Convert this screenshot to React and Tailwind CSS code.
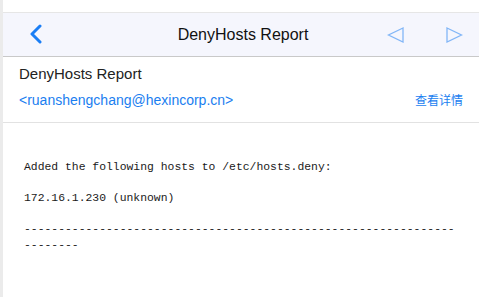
import React from 'react';

const dashes = '-'.repeat(71);

const body = `Added the following hosts to /etc/hosts.deny:

172.16.1.230 (unknown)

${dashes}`;

const App = () => {
    return (
        <div className="flex h-[297px] w-[479px] overflow-hidden bg-white font-['Liberation_Sans',Arial,sans-serif]">
            <div className="w-[3px] shrink-0 bg-[#ebebeb]" />

            <div className="flex flex-1 flex-col">
                <div className="h-[13px] shrink-0 border-b border-[#e6e6e6] bg-white" />

                <div className="relative flex h-[44px] shrink-0 items-center justify-center border-b border-[#c9c9c9] bg-[#f5f6fd] pl-[4px]">
                    <svg className="absolute left-[24px] top-[11px]" width="20" height="20" viewBox="0 0 20 20">
                        <path d="M13 2 L5 10 L13 18" fill="none" stroke="#1a7ef5" strokeWidth="3" strokeLinecap="round" strokeLinejoin="round" />
                    </svg>
                    <span className="text-[16px] text-[#111]">DenyHosts Report</span>
                    <svg className="absolute left-[384px] top-[14px]" width="17" height="16" viewBox="0 0 17 16">
                        <path d="M16 1 L1.5 8 L16 15 Z" fill="none" stroke="#82b6f7" strokeWidth="1.3" strokeLinejoin="miter" />
                    </svg>
                    <svg className="absolute left-[443px] top-[14px]" width="17" height="16" viewBox="0 0 17 16">
                        <path d="M1 1 L15.5 8 L1 15 Z" fill="none" stroke="#82b6f7" strokeWidth="1.3" strokeLinejoin="miter" />
                    </svg>
                </div>

                <div className="flex h-[66px] shrink-0 flex-col border-b border-[#e2e2e2] px-[16px] pt-[7px]">
                    <div className="text-[15px] leading-[20px] text-[#222]">DenyHosts Report</div>
                    <div className="mt-[8px] flex items-center justify-between leading-[16px] text-[#1a7ef0]">
                        <span className="text-[14px]">&lt;ruanshengchang@hexincorp.cn&gt;</span>
                        <span className="font-['Noto_Sans_CJK_SC',sans-serif] text-[12px]">查看详情</span>
                    </div>
                </div>

                <div className="pl-[21px] pt-[37px]">
                    <pre className="w-[434px] whitespace-pre-wrap break-all font-['Liberation_Mono',monospace] text-[11.4px] leading-[15.6px] text-[#1a1a1a]">
                        {body}
                    </pre>
                </div>
            </div>
        </div>
    );
};

export default App;
